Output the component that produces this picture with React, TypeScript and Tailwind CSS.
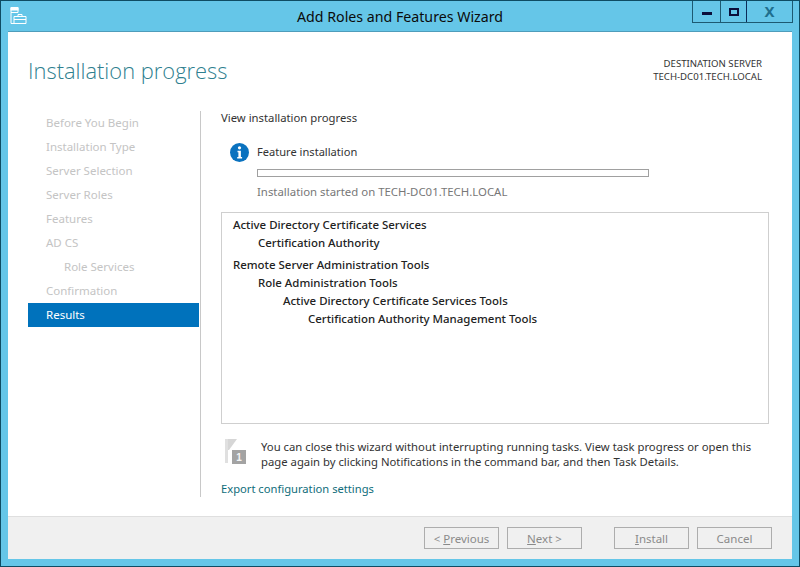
const steps = [
  { name: "Before You Begin" },
  { name: "Installation Type" },
  { name: "Server Selection" },
  { name: "Server Roles" },
  { name: "Features" },
  { name: "AD CS" },
  { name: "Role Services", sub: true },
  { name: "Confirmation" },
  { name: "Results", active: true },
];

const features = [
  { name: "Active Directory Certificate Services", level: "pl-0", gap: "" },
  { name: "Certification Authority", level: "pl-[25px]", gap: "" },
  { name: "Remote Server Administration Tools", level: "pl-0", gap: "mt-[4px]" },
  { name: "Role Administration Tools", level: "pl-[25px]", gap: "" },
  { name: "Active Directory Certificate Services Tools", level: "pl-[50px]", gap: "" },
  { name: "Certification Authority Management Tools", level: "pl-[75px]", gap: "" },
];

function ServerIcon() {
  return (
    <svg width="17" height="17" viewBox="0 0 17 17" fill="none" stroke="white" strokeWidth="1">
      <path d="M1 .5h7v5H1zM1 5.5v11h5" />
      <rect x="1" y="1" width="7" height="2" fill="white" />
      <path d="M4 9.5h12v7H4zM8 9.5v-2h4v2M4 12.5h12" />
    </svg>
  );
}

function InfoIcon() {
  return (
    <svg width="19" height="19" viewBox="0 0 19 19" className="shrink-0">
      <circle cx="9.5" cy="9.5" r="9.5" fill="#0a72bf" />
      <circle cx="9.5" cy="4.8" r="1.6" fill="white" />
      <path d="M7.5 7.8h3.4v6.2h1.2v1.4H7.2V14h1.2V9.2H7.5z" fill="white" />
    </svg>
  );
}

function FlagIcon() {
  return (
    <svg width="24" height="28" viewBox="0 0 24 28">
      <path d="M1 1h3v24H1z" fill="#e0e0e0" />
      <path d="M4 1h9L5 12H4z" fill="#d6d6d6" />
      <rect x="8" y="12" width="14" height="14" fill="#a3a3a3" />
      <text x="15" y="23" textAnchor="middle" fontSize="10" fontWeight="700" fill="#f5f5f5" fontFamily="Liberation Sans, sans-serif">
        1
      </text>
    </svg>
  );
}

function WizardButton({ label, accel, rest, prefix }: { label?: string; accel?: string; rest?: string; prefix?: string }) {
  return (
    <button className="w-[75px] h-[22px] pt-[1px] border border-[#adadad] bg-[#f0f0f0] text-[#8a8a8a] text-[11.5px] leading-none flex items-center justify-center whitespace-pre">
      {prefix}
      {accel && <span className="underline">{accel}</span>}
      {rest}
      {label}
    </button>
  );
}

export default function App() {
  return (
    <div className="w-[800px] h-[567px] overflow-hidden flex flex-col bg-[#65c6e8] border border-[#0e4c63] font-['Noto_Sans','Liberation_Sans',sans-serif] text-[#333]">
      {/* title bar */}
      <div className="h-[30px] flex shrink-0 relative">
        <div className="pl-[9px] pt-[6px] w-[250px]">
          <ServerIcon />
        </div>
        <div className="absolute left-0 right-0 top-[6px] text-center text-[14.2px] leading-[20px] text-[#0b0b0b]">
          Add Roles and Features Wizard
        </div>
        <div className="ml-auto mr-[6px] flex h-[22px] border border-t-0 border-[#1d5a72] relative">
          <div className="w-[28px] flex items-center justify-center border-r border-[#1d5a72]">
            <div className="w-[10px] h-[3px] bg-[#0b0f3a] mt-[3px]" />
          </div>
          <div className="w-[26px] flex items-center justify-center border-r border-[#0b2b58]">
            <div className="w-[10px] h-[8px] border-2 border-[#0b0f3a]" />
          </div>
          <div className="w-[45px] flex items-center justify-center text-[#1f6f8e] text-[15px] font-bold leading-none">
            X
          </div>
        </div>
      </div>

      {/* window body */}
      <div className="mx-[7px] h-[528px] bg-white flex flex-col shrink-0 border-t border-[#4f9dbb]">
        <div className="h-[79px] shrink-0 flex justify-between pl-[20px] pr-[30px]">
          <h1 className="pt-[22px] text-[21.9px] leading-[34px] font-light text-[#2f7f8f] font-['Open_Sans','Noto_Sans',sans-serif]">
            Installation progress
          </h1>
          <div className="pt-[25px] text-right text-[9.6px] leading-[13px] text-[#333]">
            <div>DESTINATION SERVER</div>
            <div>TECH-DC01.TECH.LOCAL</div>
          </div>
        </div>

        <div className="flex h-[386px] shrink-0 pl-[20px]">
          {/* steps */}
          <nav className="w-[172px] shrink-0 border-r border-[#c8c8c8] box-content">
            <ul className="-mt-[0px]">
              {steps.map((s) => (
                <li
                  key={s.name}
                  className={
                    "h-[24px] w-[171px] flex items-center text-[11.5px] " +
                    (s.active ? "bg-[#0072bc] text-white " : "text-[#c4c4c4] ") +
                    (s.sub ? "pl-[36px]" : "pl-[18px]")
                  }
                >
                  {s.name}
                </li>
              ))}
            </ul>
          </nav>

          {/* main panel */}
          <div className="pl-[20px] flex flex-col w-[569px]">
            <p className="-mt-[1px] text-[11.3px] leading-[16px]">View installation progress</p>
            <div className="flex mt-[17px] ml-[9px]">
              <InfoIcon />
              <div className="ml-[8px]">
                <div className="text-[11.1px] leading-[16px] mt-[1px]">Feature installation</div>
                <div className="mt-[9px] w-[392px] h-[8px] border border-[#a0a0a0] bg-white" />
                <div className="mt-[7px] text-[11.4px] leading-[16px] text-[#777]">
                  Installation started on TECH-DC01.TECH.LOCAL
                </div>
              </div>
            </div>

            <div className="mt-[12px] w-[548px] h-[213px] border border-[#cfcfcf] px-[11px] pt-[3px] text-[11.45px] leading-[18px] font-medium text-[#222]">
              {features.map((f) => (
                <div key={f.name} className={f.level + " " + f.gap}>
                  {f.name}
                </div>
              ))}
            </div>

            <div className="flex mt-[15px] ml-[3px]">
              <div className="w-[37px] shrink-0 -mt-[1px]">
                <FlagIcon />
              </div>
              <p className="text-[11.3px] leading-[15px] w-[500px]">
                You can close this wizard without interrupting running tasks. View task progress or open this page again by clicking Notifications in the command bar, and then Task Details.
              </p>
            </div>
            <a className="mt-[12px] text-[11.2px] leading-[16px] text-[#0f6d7a]">Export configuration settings</a>
          </div>
        </div>

        {/* footer */}
        <div className="mt-auto h-[43px] shrink-0 bg-[#f0f0f0] border-t border-[#dfdfdf] flex items-center justify-end pr-[20px]">
          <WizardButton prefix="< " accel="P" rest="revious" />
          <div className="w-[8px]" />
          <WizardButton accel="N" rest="ext >" />
          <div className="w-[32px]" />
          <WizardButton accel="I" rest="nstall" />
          <div className="w-[8px]" />
          <WizardButton label="Cancel" />
        </div>
      </div>
    </div>
  );
}
